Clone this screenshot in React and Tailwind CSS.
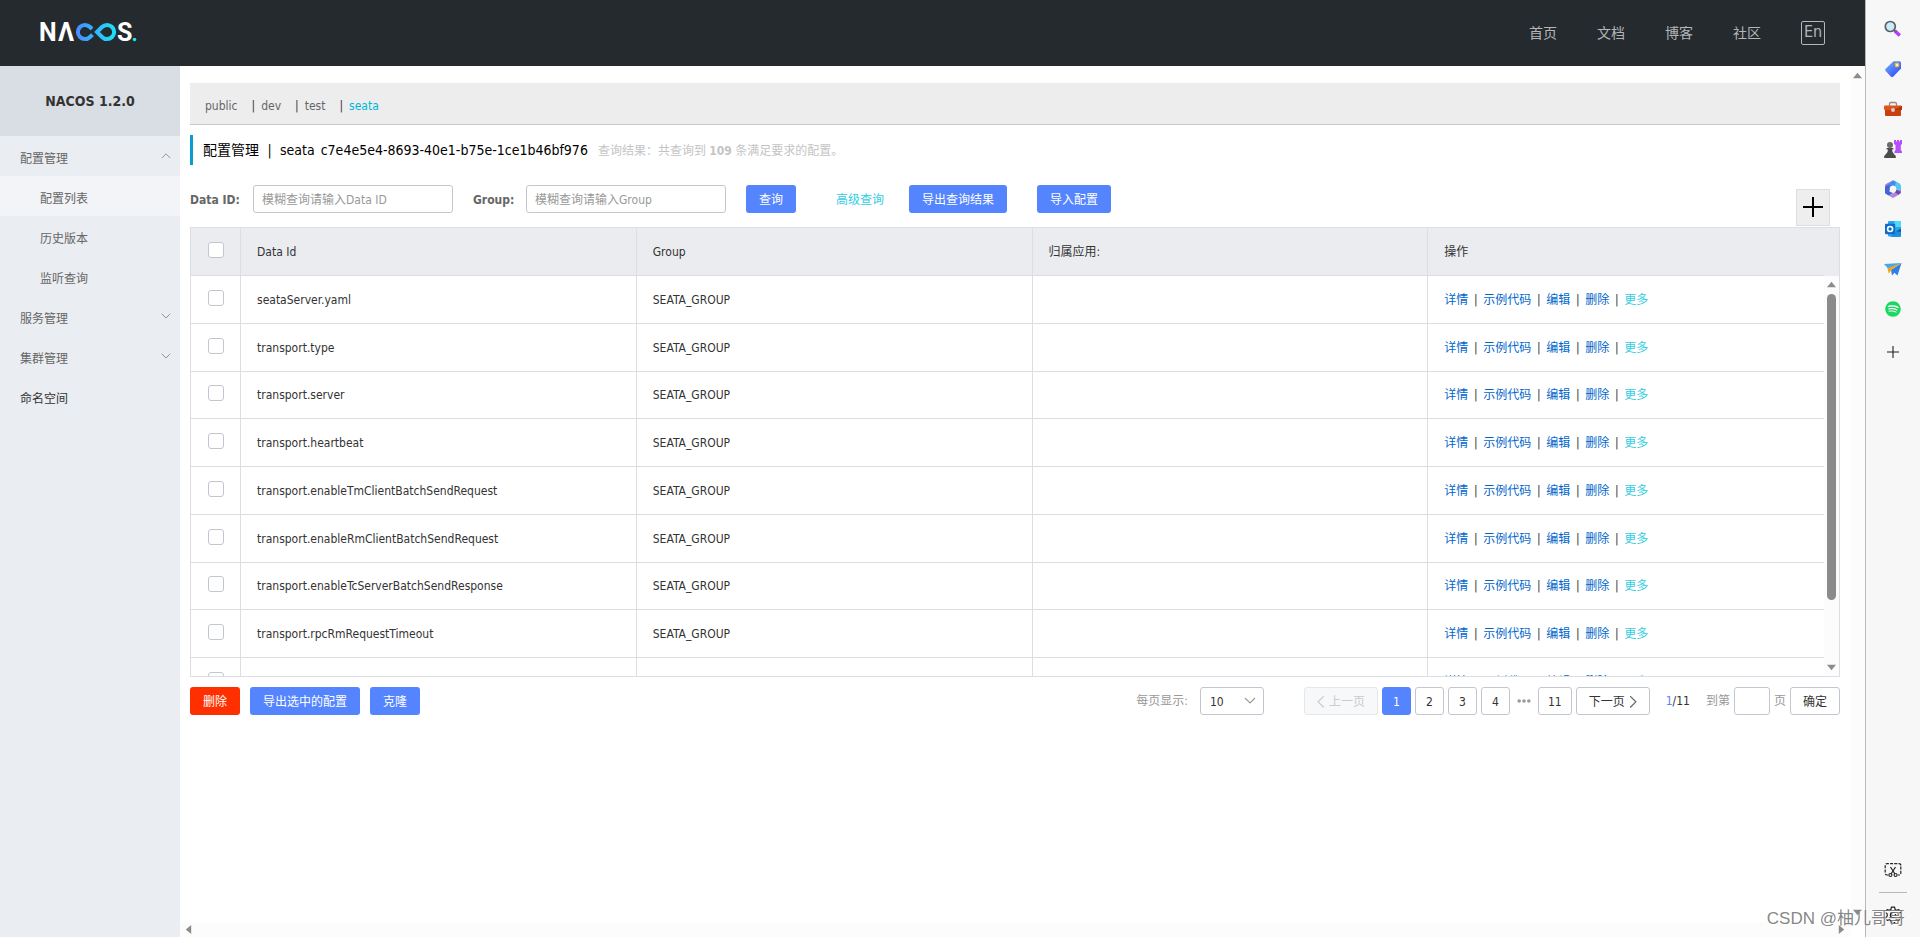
import React, { useState } from "react";
import { FaSpotify } from "react-icons/fa";

const namespaces = ["public", "dev", "test", "seata"];

const configs = [
  "seataServer.yaml",
  "transport.type",
  "transport.server",
  "transport.heartbeat",
  "transport.enableTmClientBatchSendRequest",
  "transport.enableRmClientBatchSendRequest",
  "transport.enableTcServerBatchSendResponse",
  "transport.rpcRmRequestTimeout",
  "transport.rpcTmRequestTimeout",
];

const actions = ["详情", "示例代码", "编辑", "删除"];

function Btn({ children, className = "bg-[#5584ff]" }) {
  return (
    <button className={`h-7 px-[13px] pt-px rounded-[3px] text-white whitespace-nowrap ${className}`}>
      {children}
    </button>
  );
}

function PageBtn({ children, active }) {
  return (
    <button
      className={`h-7 min-w-[29px] px-[9px] pt-px rounded-[3px] border ${
        active ? "bg-[#5584ff] border-[#5584ff] text-white" : "bg-white border-[#c4c6cf] text-[#333]"
      }`}
    >
      {children}
    </button>
  );
}

function Chevron({ dir, className }) {
  const d = {
    up: "M1 6 L6 1 L11 6",
    down: "M1 1 L6 6 L11 1",
    left: "M6 1 L1 6 L6 11",
    right: "M1 1 L6 6 L1 11",
  }[dir];
  const box = dir === "up" || dir === "down" ? "0 0 12 7" : "0 0 7 12";
  return (
    <svg viewBox={box} className={className} fill="none" stroke="currentColor" strokeWidth="1.1">
      <path d={d} />
    </svg>
  );
}

function Arrow({ dir }) {
  const d = {
    up: "M0 8 L5 2 L10 8 Z",
    down: "M0 2 L5 8 L10 2 Z",
    left: "M8 0 L2 5 L8 10 Z",
    right: "M2 0 L8 5 L2 10 Z",
  }[dir];
  return (
    <svg viewBox="0 0 10 10" className="size-[9px] shrink-0" fill="#8b8b8b">
      <path d={d} />
    </svg>
  );
}

function Logo() {
  return (
    <svg width="100" height="40" viewBox="-2 -7 100 40" role="img" aria-label="NACOS">
      <defs>
        <linearGradient id="loop" x1="36" x2="77" y1="0" y2="0" gradientUnits="userSpaceOnUse">
          <stop offset="0" stopColor="#4a8bff" />
          <stop offset="1" stopColor="#17e6f5" />
        </linearGradient>
      </defs>
      <g fill="#fff" className="font-['Roboto'] font-bold text-[25px]">
        <text x="-1" y="21">N</text>
        <text x="18" y="21">Λ</text>
        <text x="77" y="21">S</text>
      </g>
      <g fill="none" stroke="url(#loop)" strokeWidth="4">
        <path d="M52 9 L50 7 A7.1 7.1 0 1 0 50 17 L52.5 14.8" />
        <path d="M57 12 L62 7 A7.1 7.1 0 1 1 62 17 Z" />
      </g>
      <circle cx="94.5" cy="19.5" r="1.8" fill="#17e6f5" />
    </svg>
  );
}

/* browser side bar icons */
function SearchIcon() {
  return (
    <svg viewBox="0 0 18 18" className="size-[18px]">
      <path d="M11 11 L15.8 15.5" stroke="#b63bff" strokeWidth="3.4" />
      <path d="M10 10 L12 12" stroke="#666" strokeWidth="2" />
      <circle cx="6.3" cy="6.5" r="5" fill="#c9ecfb" stroke="#5c5f63" strokeWidth="1.7" />
    </svg>
  );
}

function TagIcon() {
  return (
    <svg viewBox="0 0 18 18" className="size-[18px]">
      <defs>
        <linearGradient id="tag" x1="0" y1="0" x2="1" y2="1">
          <stop offset="0" stopColor="#6fb4ff" />
          <stop offset="1" stopColor="#2f3df5" />
        </linearGradient>
      </defs>
      <path d="M9.5 1.2 H15.3 Q17 1.2 17 3 V8.6 L9.4 16.4 Q8 17.6 6.8 16.4 L1.6 11 Q.6 9.8 1.7 8.7 Z" fill="url(#tag)" />
      <circle cx="13" cy="5" r="1.7" fill="#fff" stroke="#f4c21b" strokeWidth="1.4" />
    </svg>
  );
}

function ToolboxIcon() {
  return (
    <svg viewBox="0 0 18 18" className="size-[18px]">
      <path d="M5.5 6 V3.8 Q5.5 2.5 7 2.5 H11 Q12.5 2.5 12.5 3.8 V6" fill="none" stroke="#8d8d8d" strokeWidth="1.3" />
      <rect x="1" y="9" width="16" height="7" rx="1" fill="#c9400f" />
      <rect x="0" y="5.5" width="18" height="4.5" rx="1" fill="#e0531a" />
      <path d="M9 10 H18 V6 Z" fill="#b8330c" />
      <circle cx="9" cy="10" r="1.9" fill="#d4d4d4" />
    </svg>
  );
}

function ChessIcon() {
  return (
    <svg viewBox="0 0 18 18" className="size-[18px]">
      <path d="M10 0 H12 V1.5 H13 V0 H15 V1.5 H16 V0 H18 V4 L16.8 5 V10 L18 11.5 V13 H10.4 V11.5 L11.5 10 V5 L10 4 Z" fill="#b84dff" />
      <circle cx="6" cy="5" r="3" fill="#6b6b6b" />
      <path d="M2.6 8 H9.4 V9.6 H8 Q8.2 12.5 10 14 L11.8 16 V18 H.2 V16 L2 14 Q4 12.5 4 9.6 H2.6 Z" fill="#4c4c4c" />
    </svg>
  );
}

function OfficeIcon() {
  return (
    <svg viewBox="0 0 18 18" className="size-[18px]">
      <path d="M9 .3 L6 3 V10 L1 12 V5.6 Q1 4.6 2 4 Z" fill="#9a7be0" />
      <path d="M9 .3 Q9.6 .3 10.2 .7 L16 4 L13 7 L9 5.5 L5.5 8 V3 Z" fill="#3f8fe4" />
      <path d="M12 1.7 L16 4 Q17 4.6 17 5.6 V12 L12.5 9.5 L11 5.5 Z" fill="#54c8f5" />
      <path d="M1 7 L5.5 4 V11.5 L9 13 L5 15.7 L2 14 Q1 13.4 1 12.4 Z" fill="#4664d6" />
      <path d="M5 15.7 L12 11.5 L17 9.5 V12.4 Q17 13.4 16 14 L10 17.4 Q9 17.9 8 17.4 Z" fill="#b583d8" />
      <path d="M12.5 9.5 L17 12 L14.5 14.8 L11 12.2 Z" fill="#6a4aa8" />
      <circle cx="9" cy="9" r="3.2" fill="#f7f7f7" />
    </svg>
  );
}

function OutlookIcon() {
  return (
    <svg viewBox="0 0 18 18" className="size-[18px]">
      <rect x="4" y="1" width="13" height="15.5" rx="1" fill="#28a8ea" />
      <rect x="10.5" y="1" width="6.5" height="6" fill="#50d9ff" />
      <path d="M6 16.8 L17 9.2 V15.8 Q17 16.8 16 16.8 Z" fill="#1490df" />
      <path d="M11 12 L17 16.8 H8 Z" fill="#1b8fe0" />
      <path d="M11.5 11.5 L17 8.5 V12 Z" fill="#0f5fa8" />
      <rect x="1" y="3.8" width="10.2" height="10.4" rx="1" fill="#0f6cc9" />
      <circle cx="6.1" cy="9" r="2.5" fill="none" stroke="#fff" strokeWidth="1.6" />
    </svg>
  );
}

function PlaneIcon() {
  return (
    <svg viewBox="0 0 18 18" className="size-[18px]">
      <path d="M0 4 L17.5 3 L5 9.5 Z" fill="#3ea9f5" />
      <path d="M17.5 3 L13.5 15.5 L10.5 12.8 L8 15.5 L7 10 Z" fill="#2f7fe8" />
      <path d="M17.5 3 L3.4 8 L4.8 13.8 L7.6 9.5 Z" fill="#f5a31a" />
    </svg>
  );
}

function SnipIcon() {
  return (
    <svg viewBox="0 0 18 18" className="size-[18px]" fill="none" stroke="#222" strokeWidth="1.2">
      <path d="M4 14 H3.2 Q1.2 14 1.2 12 V4.4 Q1.2 2.6 3.2 2.6 H14.8 Q16.8 2.6 16.8 4.4 V12 Q16.8 14 14.8 14 H14" strokeDasharray="3 1.2" />
      <path d="M6.5 6 L10.8 12.8 M11.5 6 L7.2 12.8" />
      <circle cx="6.4" cy="14" r="1.5" />
      <circle cx="11.6" cy="14" r="1.5" />
    </svg>
  );
}

function GearIcon() {
  return (
    <svg viewBox="0 0 18 18" className="size-[18px]" fill="none" stroke="#222" strokeWidth="1.2">
      <path d="M7.4 1.2 H10.6 L11.1 3.5 L12.6 4.3 L14.8 3.6 L16.5 6.4 L14.8 8 V10 L16.5 11.6 L14.8 14.4 L12.6 13.7 L11.1 14.5 L10.6 16.8 H7.4 L6.9 14.5 L5.4 13.7 L3.2 14.4 L1.5 11.6 L3.2 10 V8 L1.5 6.4 L3.2 3.6 L5.4 4.3 L6.9 3.5 Z" strokeLinejoin="round" />
      <circle cx="9" cy="9" r="2.6" />
    </svg>
  );
}

const sideIcons = [
  { name: "搜索", icon: <SearchIcon /> },
  { name: "购物", icon: <TagIcon /> },
  { name: "工具", icon: <ToolboxIcon /> },
  { name: "游戏", icon: <ChessIcon /> },
  { name: "Microsoft 365", icon: <OfficeIcon /> },
  { name: "Outlook", icon: <OutlookIcon /> },
  { name: "Drop", icon: <PlaneIcon /> },
  { name: "Spotify", icon: <FaSpotify className="size-4 text-[#1ed760]" /> },
];

function BrowserBar() {
  return (
    <aside className="w-[55px] shrink-0 border-l border-[#b8b8b8] bg-[#f7f7f7] flex flex-col items-center pt-[9px]">
      {sideIcons.map((s) => (
        <button key={s.name} aria-label={s.name} className="h-10 w-full flex items-center justify-center">
          {s.icon}
        </button>
      ))}
      <button aria-label="添加" className="mt-[3px] h-10 w-full flex items-center justify-center">
        <svg viewBox="0 0 12 12" className="size-3" stroke="#222" strokeWidth="1.1">
          <path d="M6 0 V12 M0 6 H12" />
        </svg>
      </button>
      <button aria-label="截图" className="mt-auto h-11 w-full flex items-center justify-center">
        <SnipIcon />
      </button>
      <hr className="w-7 border-[#b8b8b8]" />
      <button aria-label="设置" className="h-11 w-full flex items-center justify-center">
        <GearIcon />
      </button>
    </aside>
  );
}

function Header() {
  return (
    <header className="h-[66px] shrink-0 bg-[#252a2f] flex items-center justify-between pl-[38px] pr-10">
      <a href="#home"><Logo /></a>
      <nav className="flex items-center gap-10 text-sm text-[#b4b6b8]">
        {["首页", "文档", "博客", "社区"].map((t) => (
          <a key={t} href="#top">{t}</a>
        ))}
        <button className="size-6 flex justify-center border border-[#b4b6b8] rounded-[2px] text-base leading-5">En</button>
      </nav>
    </header>
  );
}

function MenuItem({ children, dir }) {
  return (
    <button className="h-10 w-full flex items-center justify-between pl-5 pr-2 pt-[6px] text-[#666]">
      {children}
      <Chevron dir={dir} className="w-[10px] mb-[6px] mr-[1px] text-[#8a8a8a]" />
    </button>
  );
}

function SideNav() {
  return (
    <nav className="w-[180px] shrink-0 bg-[#eaedf1]">
      <h1 className="h-[70px] bg-[#d9dde4] flex items-center justify-center text-sm font-bold text-[#333]">
        NACOS 1.2.0
      </h1>
      <MenuItem dir="up">配置管理</MenuItem>
      {["配置列表", "历史版本", "监听查询"].map((t, i) => (
        <a
          key={t}
          href="#config"
          className={`h-10 flex items-center pl-10 pt-[6px] text-[#666] ${i === 0 ? "bg-[#f2f4f7]" : ""}`}
        >
          {t}
        </a>
      ))}
      <MenuItem dir="down">服务管理</MenuItem>
      <MenuItem dir="down">集群管理</MenuItem>
      <a href="#namespace" className="h-10 flex items-center pl-5 pt-[6px] text-[#333]">命名空间</a>
    </nav>
  );
}

function Check({ label }) {
  return (
    <input
      type="checkbox"
      aria-label={label}
      className="appearance-none block mx-auto mb-[3px] size-4 rounded-[3px] border border-[#c4c6cf] bg-white"
    />
  );
}

function ConfigTable() {
  const cell = "border-b border-[#dcdee3] px-4 pt-px pb-0 text-left font-normal";
  const mid = cell + " border-r";
  const check = "w-[50px] border-b border-r border-[#dcdee3] p-0";
  return (
    <div className="border border-[#dcdee3] text-[#333]">
      <div className="bg-[#ebecf0] pr-[15px]">
        <table className="w-full h-12 table-fixed border-separate border-spacing-0">
          <thead>
            <tr>
              <th className={check}><Check label="全选" /></th>
              <th className={mid}>Data Id</th>
              <th className={mid}>Group</th>
              <th className={mid}>归属应用:</th>
              <th className={cell}>操作</th>
            </tr>
          </thead>
        </table>
      </div>
      <div className="flex h-[400px] overflow-hidden">
        <div className="flex-1 overflow-hidden">
          <table className="w-full h-[430px] table-fixed border-separate border-spacing-0">
            <tbody>
              {configs.map((c) => (
                <tr key={c}>
                  <td className={check}><Check label={c} /></td>
                  <td className={mid}>{c}</td>
                  <td className={mid}>SEATA_GROUP</td>
                  <td className={mid}></td>
                  <td className={cell}>
                    <div className="flex">
                      {actions.map((a) => (
                        <React.Fragment key={a}>
                          <a href="#detail" className="text-[#0066cc]">{a}</a>
                          <span className="w-[15px] text-center">|</span>
                        </React.Fragment>
                      ))}
                      <a href="#more" className="text-[#33cde5]">更多</a>
                    </div>
                  </td>
                </tr>
              ))}
            </tbody>
          </table>
        </div>
        <div className="w-[15px] bg-[#fcfcfc] flex flex-col items-center pt-1 pb-1">
          <Arrow dir="up" />
          <div className="mt-[5px] w-[9px] h-[306px] rounded-full bg-[#8b8b8b]" />
          <div className="mt-auto flex"><Arrow dir="down" /></div>
        </div>
      </div>
    </div>
  );
}

function Pagination() {
  return (
    <div className="flex items-center gap-1 text-[#999]">
      <label htmlFor="size" className="mr-2">每页显示:</label>
      <div className="relative mr-9">
        <select id="size" className="appearance-none w-16 h-7 pl-[9px] pt-px rounded-[3px] border border-[#c4c6cf] bg-white text-[#333]">
          <option>10</option>
        </select>
        <Chevron dir="down" className="absolute right-2 top-[10px] w-3 pointer-events-none" />
      </div>
      <button disabled className="h-7 px-3 pt-px flex items-center gap-1 rounded-[3px] border border-[#e6e7eb] bg-[#f7f8fa] text-[#ccc]">
        <Chevron dir="left" className="w-2" />
        上一页
      </button>
      <PageBtn active>1</PageBtn>
      <PageBtn>2</PageBtn>
      <PageBtn>3</PageBtn>
      <PageBtn>4</PageBtn>
      <svg viewBox="0 0 14 4" className="w-[14px] mx-[3px]" fill="#999">
        <circle cx="2.2" cy="2" r="1.8" />
        <circle cx="7" cy="2" r="1.8" />
        <circle cx="11.8" cy="2" r="1.8" />
      </svg>
      <PageBtn>11</PageBtn>
      <button className="h-7 px-3 pt-px flex items-center gap-1 rounded-[3px] border border-[#c4c6cf] bg-white text-[#333]">
        下一页
        <Chevron dir="right" className="w-2 text-[#666]" />
      </button>
      <span className="mx-3 text-[#333]"><span className="text-[#5584ff]">1</span>/11</span>
      <label htmlFor="jump">到第</label>
      <input id="jump" className="w-9 h-7 px-2 rounded-[3px] border border-[#c4c6cf] bg-white" />
      <span>页</span>
      <button className="h-7 px-3 pt-px rounded-[3px] border border-[#c4c6cf] bg-white text-[#333]">确定</button>
    </div>
  );
}

export default function App() {
  const [dataId, setDataId] = useState("");
  const [group, setGroup] = useState("");
  const input = "w-[200px] h-7 px-2 pt-px rounded-[3px] border border-[#c4c6cf] placeholder:text-[#999] outline-none";
  const label = "pt-px leading-7 font-bold text-[#666]";

  return (
    <div className="relative flex h-screen overflow-hidden bg-white text-xs font-['DejaVu_Sans_Condensed','Noto_Sans_CJK_SC',sans-serif]">
      <div className="flex-1 min-w-0 flex flex-col">
        <Header />
        <div className="flex-1 min-h-0 flex">
          <SideNav />
          <div className="flex-1 min-w-0 flex flex-col">
            <div className="flex-1 min-h-0 flex">
              <main className="flex-1 min-w-0 px-[10px] pt-[17px]">
                {/* namespaces */}
                <div className="h-[42px] pl-[15px] flex items-center bg-[#ededed] border-b border-[#c8c8c8] pt-[5px]">
                  {namespaces.map((n, i) => (
                    <div key={n} className="flex mr-[14px]">
                      {i > 0 && <span className="mr-[6px] text-[#333]">|</span>}
                      <a href="#ns" className={n === "seata" ? "text-[#00b7d8]" : "text-[#666]"}>{n}</a>
                    </div>
                  ))}
                </div>

                {/* title */}
                <div className="mt-[10px] h-[30px] pl-[10px] flex items-center border-l-[3px] border-[#0a9bd0]">
                  <h2 className="flex text-sm text-black">
                    配置管理
                    <span className="w-[21px] text-center">|</span>
                    <span className="mr-[6px]">seata</span>
                    c7e4e5e4-8693-40e1-b75e-1ce1b46bf976
                  </h2>
                  <p className="ml-[10px] pt-px text-[#c4c4c4]">
                    查询结果：共查询到 <b>109</b> 条满足要求的配置。
                  </p>
                </div>

                {/* search */}
                <div className="mt-5 h-[42px] flex items-start">
                  <label htmlFor="dataId" className={`w-[63px] ${label}`}>Data ID:</label>
                  <input id="dataId" value={dataId} onChange={(e) => setDataId(e.target.value)} placeholder="模糊查询请输入Data ID" className={input} />
                  <label htmlFor="group" className={`ml-5 w-[53px] ${label}`}>Group:</label>
                  <input id="group" value={group} onChange={(e) => setGroup(e.target.value)} placeholder="模糊查询请输入Group" className={input} />
                  <div className="ml-5 flex items-center">
                    <Btn>查询</Btn>
                    <a href="#advanced" className="ml-10 mr-[25px] pt-px text-[#33cde5]">高级查询</a>
                    <Btn>导出查询结果</Btn>
                    <Btn className="ml-[30px] bg-[#5584ff]">导入配置</Btn>
                  </div>
                  <button aria-label="新建配置" className="ml-auto mr-[10px] mt-1 pb-[2px] w-[34px] h-[37px] flex items-center justify-center bg-[#eee] border border-[#dcdee3]">
                    <svg viewBox="0 0 20 20" className="size-5" stroke="#000" strokeWidth="2">
                      <path d="M10 0 V20 M0 10 H20" />
                    </svg>
                  </button>
                </div>

                <ConfigTable />

                <div className="mt-[10px] flex items-center justify-between">
                  <div className="flex gap-[10px]">
                    <Btn className="bg-[#ff3000]">删除</Btn>
                    <Btn>导出选中的配置</Btn>
                    <Btn>克隆</Btn>
                  </div>
                  <Pagination />
                </div>
              </main>
              <div className="w-[15px] bg-[#fcfcfc] flex flex-col items-center justify-between py-[5px]">
                <Arrow dir="up" />
                <Arrow dir="down" />
              </div>
            </div>
            <div className="h-[15px] mr-[15px] bg-[#fcfcfc] flex items-center justify-between px-1">
              <Arrow dir="left" />
              <Arrow dir="right" />
            </div>
          </div>
        </div>
      </div>
      <BrowserBar />
      <div className="absolute right-[15px] bottom-[6px] text-[17px] text-[#777]/90 pointer-events-none font-['Liberation_Sans','Noto_Sans_CJK_SC',sans-serif] [text-shadow:1px_1px_0_#fff]">
        CSDN @柚儿哥哥
      </div>
    </div>
  );
}
